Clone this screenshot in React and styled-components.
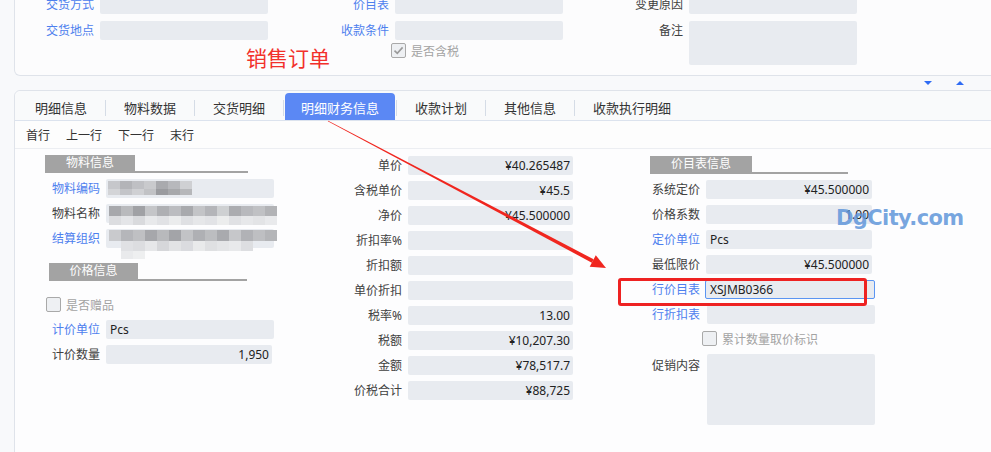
import React from "react";
import styled, { createGlobalStyle } from "styled-components";

const Global = createGlobalStyle`
  html, body { margin: 0; padding: 0; background: #f8f9fb; overflow: hidden; }
  body {
    font-family: "Noto Sans", "Noto Sans CJK SC", sans-serif;
    font-size: 12px;
    color: #333;
  }
  * { box-sizing: border-box; }
`;

const BLUE = "#4d80ee";
const LABEL = "#404040";
const FIELD = "#e8ebf0";
const LINE = "#dfe3ea";

const Page = styled.div`
  position: relative;
  width: 991px;
  height: 452px;
  overflow: hidden;
  padding-left: 14px;
`;

/* ---------- top header panel ---------- */
const TopPanel = styled.div`
  position: relative;
  width: 1000px;
  height: 84px;
  margin-top: -8px;
  padding-top: 3px;
  background: #fcfcfd;
  border: 1px solid ${LINE};
  border-top: none;
  border-radius: 0 0 6px 6px;
  display: grid;
  grid-template-columns: 79px 168px 115px 168px 114px 168px;
  grid-template-rows: 19px 19px 16px;
  column-gap: 6px;
  row-gap: 7px;
  align-content: start;
`;

const GridLabel = styled.div`
  text-align: right;
  line-height: 19px;
  font-size: 12px;
  white-space: nowrap;
  color: ${(p) => (p.$link ? BLUE : LABEL)};
`;

const Field = styled.div`
  position: relative;
  height: 19px;
  width: ${(p) => (p.$w ? `${p.$w}px` : "100%")};
  margin-left: ${(p) => p.$ml || 0}px;
  background: ${FIELD};
  border-radius: 2px;
  border: ${(p) => (p.$focus ? "1px solid #5b95f2" : "none")};
  padding: 0 ${(p) => (p.$right ? 3 : 4)}px;
  font-size: 12px;
  line-height: ${(p) => (p.$focus ? 17 : 19)}px;
  color: #222;
  text-align: ${(p) => (p.$right ? "right" : "left")};
  white-space: nowrap;
`;

const TextArea = styled.div`
  width: ${(p) => (p.$w ? `${p.$w}px` : "100%")};
  height: ${(p) => p.$h}px;
  margin-left: ${(p) => p.$ml || 0}px;
  background: ${FIELD};
  border-radius: 2px;
  grid-column: ${(p) => p.$col || "auto"};
  grid-row: ${(p) => p.$span || "auto"};
`;

const CheckCell = styled.div`
  grid-column: 4;
  grid-row: 3;
  margin: -6px 0 0 -4px;
`;

const RedTitle = styled.div`
  position: absolute;
  left: 231px;
  top: 55px;
  font-family: "Noto Sans CJK SC", sans-serif;
  font-size: 21px;
  line-height: 21px;
  color: #f2302b;
`;

/* ---------- collapse strip ---------- */
const Strip = styled.div`
  height: 14px;
  display: flex;
  justify-content: flex-end;
  align-items: center;
  gap: 24px;
  padding-right: 27px;
`;

const Tri = styled.span`
  width: 0;
  height: 0;
  border-left: 4px solid transparent;
  border-right: 4px solid transparent;
  ${(p) =>
    p.$up
      ? "border-bottom: 4px solid #2f6cf4;"
      : "border-top: 4px solid #2f6cf4;"}
`;

/* ---------- tab panel ---------- */
const TabPanel = styled.div`
  width: 1000px;
  height: 400px;
  background: #fdfdfe;
  border: 1px solid ${LINE};
  border-radius: 6px 0 0 0;
`;

const TabBar = styled.div`
  height: 30px;
  display: flex;
  align-items: flex-end;
  padding-left: 2px;
  background: #f9fafb;
  border-bottom: 1px solid #dce3ee;
  border-radius: 6px 0 0 0;
`;

const Tab = styled.div`
  height: 27px;
  padding: 5px ${(p) => (p.$active ? 16 : 18)}px 0;
  margin: ${(p) => (p.$active ? "0 1px 0 1px" : "0")};
  font-size: 13px;
  line-height: 20px;
  white-space: nowrap;
  color: ${(p) => (p.$active ? "#fff" : "#333")};
  background: ${(p) => (p.$active ? "#5b88f4" : "transparent")};
  border-radius: 4px 4px 0 0;
`;

const TabSep = styled.span`
  width: 1px;
  height: 16px;
  margin-bottom: 4px;
  background: #d5dce6;
`;

const Toolbar = styled.div`
  height: 28px;
  display: flex;
  align-items: center;
  gap: 16px;
  padding-left: 11px;
  border-bottom: 1px solid #eceef2;
  font-size: 12px;
  color: #333;
  background: #fdfdfd;
`;

const Content = styled.div`
  display: grid;
  grid-template-columns: 244px 244px 250px;
  column-gap: 55px;
  padding: 6px 0 0 15px;
  align-items: start;
`;

const Column = styled.div`
  display: flex;
  flex-direction: column;
  gap: 6px;
  margin-top: ${(p) => p.$mt || 0}px;
`;

const Row = styled.div`
  display: flex;
  align-items: ${(p) => (p.$top ? "flex-start" : "center")};
  gap: 6px;
  margin-top: ${(p) => p.$mt || 0}px;
`;

const Label = styled.div`
  width: ${(p) => p.$w || 70}px;
  flex: none;
  text-align: right;
  line-height: ${(p) => (p.$top ? "17px" : "19px")};
  padding-top: ${(p) => (p.$top ? 3 : 0)}px;
  font-size: 12px;
  white-space: nowrap;
  color: ${(p) => (p.$link ? BLUE : LABEL)};
`;

const SectionHead = styled.div`
  width: ${(p) => p.$w}px;
  margin-left: ${(p) => p.$ml}px;
  margin-top: ${(p) => p.$mt || 0}px;
  height: 18px;
  border-bottom: 2px solid #a3a3a3;
`;

const SectionTag = styled.div`
  width: ${(p) => p.$w}px;
  height: 16px;
  background: #a3a3a3;
  color: #fff;
  font-size: 12px;
  line-height: 16px;
  text-align: center;
`;

const CheckRow = styled.label`
  display: flex;
  align-items: center;
  gap: 5px;
  height: 19px;
  margin-left: ${(p) => p.$ml || 0}px;
  margin-top: ${(p) => p.$mt || 0}px;
  font-size: 12px;
  color: #a3a3a3;
  white-space: nowrap;
`;

const Box = styled.span`
  width: 15px;
  height: 15px;
  flex: none;
  border: 1px solid #a9a9a9;
  border-radius: 2px;
  background: #eef0f3;
  display: inline-flex;
  align-items: center;
  justify-content: center;
`;

/* mosaic (pixelated privacy blur) overlay */
const Mosaic = styled.div`
  position: absolute;
  left: ${(p) => p.$x}px;
  top: ${(p) => p.$y}px;
  display: flex;
  flex-direction: column;
  pointer-events: none;
`;
const MRow = styled.div`
  display: flex;
  margin-left: ${(p) => p.$ml || 0}px;
`;
const Cell = styled.span`
  display: block;
  width: ${(p) => p.$w || 12}px;
  height: ${(p) => p.$h}px;
`;

const Overlay = styled.svg`
  position: absolute;
  left: 0;
  top: 0;
  pointer-events: none;
`;

const RedBox = styled.div`
  position: absolute;
  left: 618px;
  top: 278px;
  width: 249px;
  height: 28px;
  border: 3px solid #ee2222;
  border-radius: 3px;
  pointer-events: none;
`;

const Watermark = styled.div`
  position: absolute;
  left: 836px;
  top: 203px;
  font-family: "DejaVu Sans", sans-serif;
  font-weight: bold;
  font-size: 21px;
  line-height: 30px;
  color: rgba(96, 150, 218, 0.85);
  letter-spacing: -0.6px;
  pointer-events: none;
`;

const Check = () => (
  <svg width="11" height="11" viewBox="0 0 11 11">
    <path d="M1.5 5.6 L4.3 8.4 L9.6 2.4" fill="none" stroke="#9a9a9a" strokeWidth="1.6" />
  </svg>
);

const MosaicBlock = ({ x, y, rows }) => (
  <Mosaic $x={x} $y={y}>
    {rows.map((r, i) => (
      <MRow key={i} $ml={r.ml}>
        {r.cells.map((c, j) => (
          <Cell key={j} $h={r.h} $w={r.w} style={{ background: c }} />
        ))}
      </MRow>
    ))}
  </Mosaic>
);

const mosaicCode = [
  { h: 8, w: 12, cells: ["#c6c7cb", "#b3b4b8", "#bfc0c4", "#c9cacd", "#a9aaae", "#b7b8bc", "#cfd0d3"] },
  { h: 6, w: 12, cells: ["#d3d4d7", "#c3c4c8", "#cfd0d3", "#c1c2c5", "#9a9b9f", "#a7a8ab", "#b6b7ba"] },
];
const mosaicName = [
  { h: 10, w: 12, cells: ["#a7a8ac", "#b9babd", "#a0a1a5", "#c4c5c8", "#aeafb3", "#bbbcc0", "#a8a9ad", "#c3c4c7", "#b4b5b9", "#ced0d2", "#abacb0", "#b8b9bd", "#c0c1c4", "#b2b3b6"] },
  { h: 9, w: 12, cells: ["#dcdde0", "#e4e5e8", "#d9dadd", "#e8e9eb", "#e1e2e5", "#ebeced", "#dfe0e3", "#e6e7e9", "#e2e3e6", "#eceded", "#e0e1e4", "#e7e8ea", "#e3e4e6", "#e9eaec"] },
];
const mosaicOrg = [
  { h: 11, w: 12, cells: ["#c9cacd", "#b5b6ba", "#bfc0c3", "#a6a7ab", "#b8b9bc", "#a3a4a8", "#c2c3c6", "#afb0b4", "#bcbdc0", "#a9aaae", "#c6c7ca", "#b1b2b6", "#bebfc2", "#b4b5b8"] },
  { h: 10, w: 12, ml: 12, cells: ["#e0e1e4", "#dcdde0", "#e6e7e9", "#d6d7da", "#e2e3e5", "#dadbdf", "#e9eaeb", "#dfe0e2", "#e4e5e7", "#e8e9eb", "#dddee1"] },
  { h: 8, w: 12, ml: 12, cells: ["#e9eaec", "#eeeff0"] },
];

const s = { x: 328, y: 121 };
const t = { x: 606, y: 268 };
const dx = t.x - s.x;
const dy = t.y - s.y;
const len = Math.hypot(dx, dy);
const u = { x: dx / len, y: dy / len };
const n = { x: -u.y, y: u.x };
const headLen = 15;
const b = { x: t.x - headLen * u.x, y: t.y - headLen * u.y };
const pt = (p, k, w) => `${(p.x + n.x * w * k).toFixed(2)},${(p.y + n.y * w * k).toFixed(2)}`;
const shaft = [pt(s, 1, 0.4), pt(b, 1, 1.9), pt(b, -1, 1.9), pt(s, -1, 0.4)].join(" ");
const head = [pt(b, 1, 6.5), `${t.x},${t.y}`, pt(b, -1, 6.5)].join(" ");

export default function App() {
  return (
    <>
      <Global />
      <Page>
        <TopPanel>
          <GridLabel $link>交货方式</GridLabel>
          <Field />
          <GridLabel $link>价目表</GridLabel>
          <Field />
          <GridLabel>变更原因</GridLabel>
          <Field />
          <GridLabel $link>交货地点</GridLabel>
          <Field />
          <GridLabel $link>收款条件</GridLabel>
          <Field />
          <GridLabel>备注</GridLabel>
          <TextArea $h={44} $col={6} $span="2 / span 2" />
          <CheckCell>
            <CheckRow>
              <Box>
                <Check />
              </Box>
              是否含税
            </CheckRow>
          </CheckCell>
          <RedTitle>销售订单</RedTitle>
        </TopPanel>

        <Strip>
          <Tri />
          <Tri $up />
        </Strip>

        <TabPanel>
          <TabBar>
            <Tab>明细信息</Tab>
            <TabSep />
            <Tab>物料数据</Tab>
            <TabSep />
            <Tab>交货明细</Tab>
            <TabSep />
            <Tab $active>明细财务信息</Tab>
            <TabSep />
            <Tab>收款计划</Tab>
            <TabSep />
            <Tab>其他信息</Tab>
            <TabSep />
            <Tab>收款执行明细</Tab>
          </TabBar>

          <Toolbar>
            <span>首行</span>
            <span>上一行</span>
            <span>下一行</span>
            <span>末行</span>
          </Toolbar>

          <Content>
            <Column>
              <SectionHead $w={203} $ml={15}>
                <SectionTag $w={90}>物料信息</SectionTag>
              </SectionHead>
              <Row>
                <Label $link>物料编码</Label>
                <Field $w={168}>
                  <MosaicBlock x={2} y={2} rows={mosaicCode} />
                </Field>
              </Row>
              <Row>
                <Label>物料名称</Label>
                <Field $w={168}>
                  <MosaicBlock x={3} y={2} rows={mosaicName} />
                </Field>
              </Row>
              <Row>
                <Label $link>结算组织</Label>
                <Field $w={168}>
                  <MosaicBlock x={3} y={1} rows={mosaicOrg} />
                </Field>
              </Row>
              <SectionHead $w={198} $ml={19} $mt={9}>
                <SectionTag $w={89}>价格信息</SectionTag>
              </SectionHead>
              <CheckRow $ml={16} $mt={8}>
                <Box />
                是否赠品
              </CheckRow>
              <Row>
                <Label $link>计价单位</Label>
                <Field $w={168}>Pcs</Field>
              </Row>
              <Row>
                <Label>计价数量</Label>
                <Field $w={166} $right>1,950</Field>
              </Row>
            </Column>

            <Column $mt={1}>
              {[
                ["单价", "¥40.265487"],
                ["含税单价", "¥45.5"],
                ["净价", "¥45.500000"],
                ["折扣率%", ""],
                ["折扣额", ""],
                ["单价折扣", ""],
                ["税率%", "13.00"],
                ["税额", "¥10,207.30"],
                ["金额", "¥78,517.7"],
                ["价税合计", "¥88,725"],
              ].map(([l, v]) => (
                <Row key={l}>
                  <Label $w={73}>{l}</Label>
                  <Field $w={166} $right>
                    {v}
                  </Field>
                </Row>
              ))}
            </Column>

            <Column $mt={1}>
              <SectionHead $w={198} $ml={22}>
                <SectionTag $w={102}>价目表信息</SectionTag>
              </SectionHead>
              <Row>
                <Label $w={72}>系统定价</Label>
                <Field $w={166} $right>¥45.500000</Field>
              </Row>
              <Row>
                <Label $w={72}>价格系数</Label>
                <Field $w={166} $right>1.00</Field>
              </Row>
              <Row>
                <Label $w={72} $link>定价单位</Label>
                <Field $w={166}>Pcs</Field>
              </Row>
              <Row>
                <Label $w={72}>最低限价</Label>
                <Field $w={166} $right>¥45.500000</Field>
              </Row>
              <Row>
                <Label $w={72} $link>行价目表</Label>
                <Field $w={170} $ml={-1} $focus>XSJMB0366</Field>
              </Row>
              <Row>
                <Label $w={72} $link>行折扣表</Label>
                <Field $w={168} $ml={1} />
              </Row>
              <CheckRow $ml={74} $mt={-1}>
                <Box />
                累计数量取价标识
              </CheckRow>
              <Row $top>
                <Label $w={72} $top>促销内容</Label>
                <TextArea $w={168} $h={71} $ml={1} />
              </Row>
            </Column>
          </Content>
        </TabPanel>

        <Watermark>DgCity.com</Watermark>
        <RedBox />
        <Overlay width="991" height="452" viewBox="0 0 991 452">
          <polygon points={shaft} fill="#f0261f" />
          <polygon points={head} fill="#f0261f" />
        </Overlay>
      </Page>
    </>
  );
}
